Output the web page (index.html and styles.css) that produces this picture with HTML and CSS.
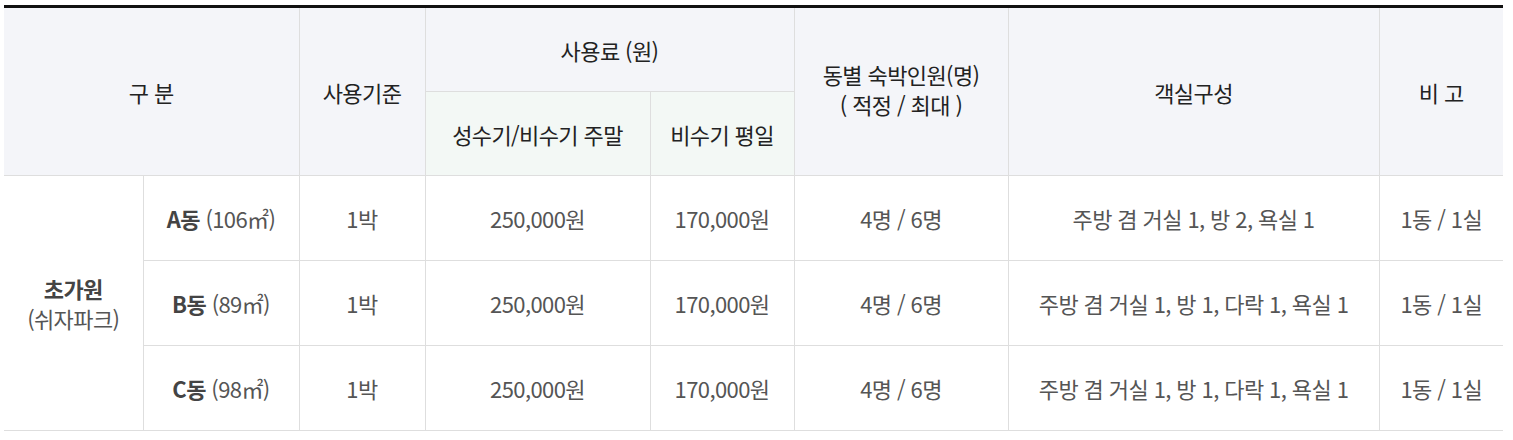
FILE: index.html
```html
<!DOCTYPE html>
<html lang="ko">
<head>
<meta charset="utf-8">
<title>사용료 안내</title>
<link rel="stylesheet" href="styles.css">
</head>
<body>
<div class="wrap">
<table class="fee-table">
  <colgroup>
    <col class="c1"><col class="c2"><col class="c3"><col class="c4"><col class="c5"><col class="c6"><col class="c7"><col class="c8">
  </colgroup>
  <thead>
    <tr>
      <th colspan="2" rowspan="2">구 분</th>
      <th rowspan="2">사용기준</th>
      <th colspan="2">사용료 (원)</th>
      <th rowspan="2" class="two-line">동별 숙박인원(명)<br>( 적정 / 최대 )</th>
      <th rowspan="2">객실구성</th>
      <th rowspan="2">비 고</th>
    </tr>
    <tr>
      <th class="sub">성수기/비수기 주말</th>
      <th class="sub">비수기 평일</th>
    </tr>
  </thead>
  <tbody>
    <tr>
      <td rowspan="3" class="group"><strong>초가원</strong><br>(쉬자파크)</td>
      <td><strong>A동</strong> (106㎡)</td>
      <td>1박</td>
      <td>250,000원</td>
      <td>170,000원</td>
      <td>4명 / 6명</td>
      <td>주방 겸 거실 1, 방 2, 욕실 1</td>
      <td>1동 / 1실</td>
    </tr>
    <tr>
      <td><strong>B동</strong> (89㎡)</td>
      <td>1박</td>
      <td>250,000원</td>
      <td>170,000원</td>
      <td>4명 / 6명</td>
      <td>주방 겸 거실 1, 방 1, 다락 1, 욕실 1</td>
      <td>1동 / 1실</td>
    </tr>
    <tr>
      <td><strong>C동</strong> (98㎡)</td>
      <td>1박</td>
      <td>250,000원</td>
      <td>170,000원</td>
      <td>4명 / 6명</td>
      <td>주방 겸 거실 1, 방 1, 다락 1, 욕실 1</td>
      <td>1동 / 1실</td>
    </tr>
  </tbody>
</table>
</div>
</body>
</html>
```
FILE: styles.css
```css
html, body {
  margin: 0;
  padding: 0;
  background: #fff;
}
.wrap {
  padding: 5px 10px 0 4px;
}
.fee-table {
  width: 1499px;
  border-collapse: collapse;
  table-layout: fixed;
  border-top: 3px solid #111;
  font-family: "Noto Sans CJK KR", "Noto Sans", sans-serif;
  letter-spacing: -0.6px;
}
.c1 { width: 139px; }
.c2 { width: 156px; }
.c3 { width: 126px; }
.c4 { width: 225px; }
.c5 { width: 144px; }
.c6 { width: 214px; }
.c7 { width: 371px; }
.c8 { width: 124px; }
.fee-table th,
.fee-table td {
  border: 1px solid #dedede;
  text-align: center;
  vertical-align: middle;
  padding: 0;
}
.fee-table tr > :first-child { border-left: 0; }
.fee-table tr > :last-child { border-right: 0; }
.fee-table th {
  background: #f4f5f9;
  color: #222;
  font-weight: 400;
  font-size: 22px;
  line-height: 30px;
  height: 83px;
}
.fee-table th.two-line {
  padding-bottom: 6px;
}
.fee-table th.sub {
  background: #f3f8f5;
}
.fee-table td {
  color: #555;
  font-size: 22px;
  line-height: 30px;
  height: 84px;
}
.fee-table td strong {
  font-weight: 700;
  color: #444;
}
.fee-table td.group {
  border-left: 0;
}
```
